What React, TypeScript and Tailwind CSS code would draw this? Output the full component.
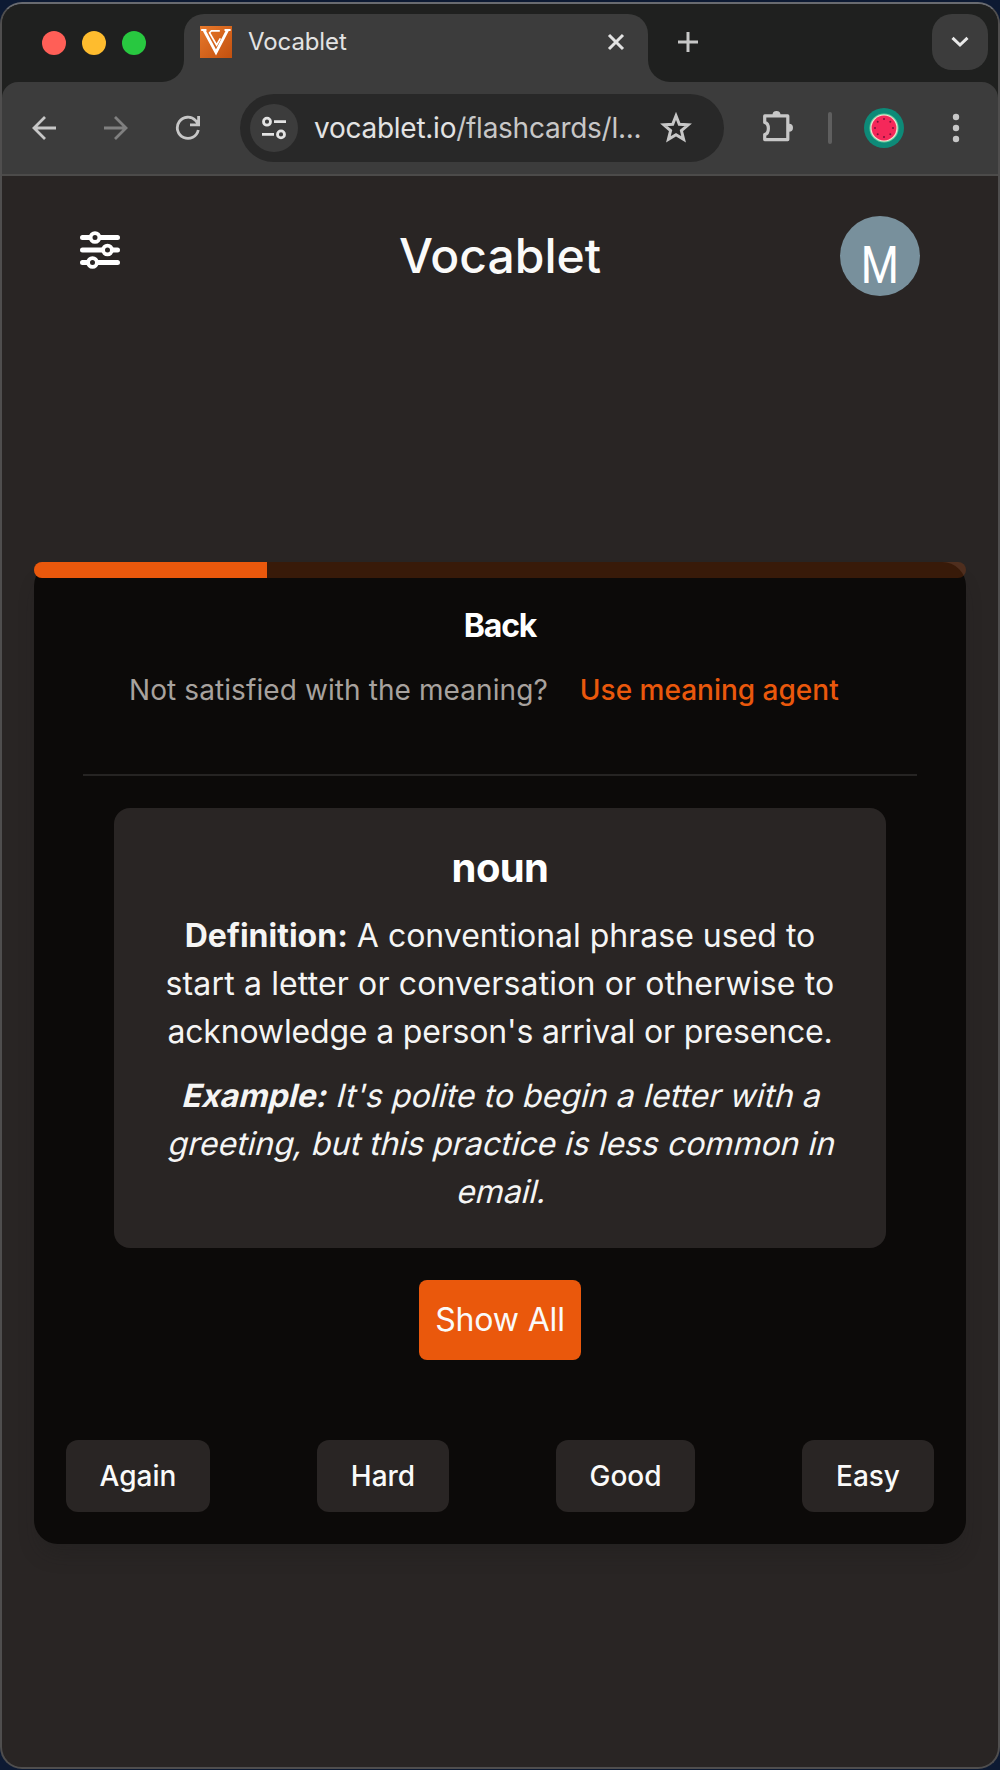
import React from "react";

function VocabletLogo() {
  return (
    <svg width="32" height="32" viewBox="0 0 32 32" className="shrink-0">
      <defs>
        <linearGradient id="logo-bg" x1="0" y1="0" x2="1" y2="1">
          <stop offset="0" stopColor="#e8792b" />
          <stop offset="1" stopColor="#c2500f" />
        </linearGradient>
      </defs>
      <rect width="32" height="32" fill="url(#logo-bg)" />
      <g fill="none" stroke="#fff">
        <path d="M4.2 4.5L16 26.5L27.6 4" strokeWidth="2.8" />
        <path d="M1.2 4H6.5M24.5 4H30.6" strokeWidth="1.8" />
        <path d="M19.8 4.8H11.4L9.6 6.8L16.6 19L20.4 12.4" strokeWidth="1.7" />
      </g>
    </svg>
  );
}

function TabStrip() {
  return (
    <div className="flex h-[78px] items-end bg-[#1f201f]">
      <div className="flex h-[78px] w-[160px] shrink-0 gap-4 pl-10 pt-[27px]">
        <span className="size-6 rounded-full bg-[#ff5f57]" />
        <span className="size-6 rounded-full bg-[#febc2e]" />
        <span className="size-6 rounded-full bg-[#28c840]" />
      </div>
      <div className="size-[22px] shrink-0 bg-[#3c3c3c]">
        <div className="size-full rounded-br-[22px] bg-[#1f201f]" />
      </div>
      <div className="flex h-[68px] w-[464px] shrink-0 items-start rounded-t-[20px] bg-[#3c3c3c] pl-4 pt-3">
        <VocabletLogo />
        <span className="ml-4 text-[24px] leading-[32px] tracking-[-0.1px] text-[#e3e3e3]">Vocablet</span>
        <svg width="20" height="20" viewBox="0 0 20 20" className="ml-auto mr-[22px] mt-[6px]">
          <path d="M3 3L17 17M17 3L3 17" stroke="#e3e3e3" strokeWidth="3" />
        </svg>
      </div>
      <div className="size-[22px] shrink-0 bg-[#3c3c3c]">
        <div className="size-full rounded-bl-[22px] bg-[#1f201f]" />
      </div>
      <svg width="20" height="20" viewBox="0 0 20 20" className="mb-[30px] ml-[8px]">
        <path d="M10 0V20M0 10H20" stroke="#c7c7c7" strokeWidth="3" />
      </svg>
      <div className="mb-3 ml-auto mr-[10px] flex size-14 items-center justify-center rounded-[20px] bg-[#3c3c3c]">
        <svg width="18" height="12" viewBox="0 0 18 12">
          <path d="M1.5 1.8L9 9L16.5 1.8" fill="none" stroke="#e8e8e8" strokeWidth="3" />
        </svg>
      </div>
    </div>
  );
}

function Toolbar() {
  return (
    <div className="bg-[#1f201f]">
      <div className="flex h-[94px] items-center rounded-t-[16px] border-b-2 border-[#4c4b4a] bg-[#3c3c3c] pl-[30px]">
        <svg width="24" height="24" viewBox="0 0 24 24" fill="none" stroke="#c7c7c7" strokeWidth="2.8">
          <path d="M24 12H2.5M13 1L2 12L13 23" />
        </svg>
        <svg width="24" height="24" viewBox="0 0 24 24" fill="none" stroke="#808080" strokeWidth="2.8" className="ml-12">
          <path d="M0 12H21.5M11 1L22 12L11 23" />
        </svg>
        <svg width="26" height="26" viewBox="0 0 26 26" fill="none" stroke="#c7c7c7" strokeWidth="2.8" className="ml-[47px]">
          <path d="M23.3 15A10.6 10.6 0 1 1 20.7 5.6L23.5 9.2M23.6 1V9.8H15" />
        </svg>
        <div className="ml-[39px] flex h-[68px] w-[484px] shrink-0 items-center rounded-full bg-[#282828] pl-[10px]">
          <div className="flex size-12 shrink-0 items-center justify-center rounded-full bg-[#3c3c3c]">
            <svg width="24" height="24" viewBox="0 0 24 24" fill="none" stroke="#e3e3e3" strokeWidth="2.8">
              <circle cx="5" cy="5.7" r="3.5" />
              <path d="M12 5.7H24M0 18.4H12" />
              <circle cx="19" cy="18.4" r="3.5" />
            </svg>
          </div>
          <span className="ml-4 w-[330px] whitespace-nowrap text-[28px] leading-[40px] tracking-[-0.26px] text-[#e3e3e3]">
            vocablet.io<span className="text-[#c7c7c7]">/flashcards/l...</span>
          </span>
          <svg width="34" height="34" viewBox="0 0 34 34" className="ml-[15px] shrink-0">
            <path
              d="M17 4.8L20.3 13.2L29.2 13.8L22.4 19.6L24.6 28.4L17 23.7L9.4 28.4L11.6 19.6L4.8 13.8L13.7 13.2Z"
              fill="none"
              stroke="#c7c7c7"
              strokeWidth="3"
            />
          </svg>
        </div>
        <svg width="34" height="34" viewBox="0 0 34 34" className="ml-[37px] shrink-0">
          <path
            d="M3.7 4.9H26.8V28.6H3.7V23.6C8.6 22.2 8.6 12.8 3.7 11.4Z"
            fill="none"
            stroke="#c7c7c7"
            strokeWidth="3.2"
            strokeLinejoin="round"
          />
          <path d="M11.5 4A4 4 0 0 1 19.5 4ZM28 12.8A4 4 0 0 1 28 20.8Z" fill="#c7c7c7" />
        </svg>
        <span className="ml-[33px] h-8 w-1 rounded-full bg-[#5f5f5f]" />
        <svg width="40" height="40" viewBox="0 0 40 40" className="ml-8 shrink-0">
          <circle cx="20" cy="20" r="20" fill="#0d8a78" />
          <circle cx="20" cy="20" r="14.6" fill="#5fcf9f" />
          <circle cx="20" cy="20" r="13.6" fill="#f7dcd0" />
          <circle cx="20" cy="20" r="12.4" fill="#f5285a" />
          <g fill="#7a1238">
            <circle cx="20" cy="11" r="1" />
            <circle cx="26.3" cy="13.7" r="1" />
            <circle cx="29" cy="20" r="1" />
            <circle cx="26.3" cy="26.3" r="1" />
            <circle cx="20" cy="29" r="1" />
            <circle cx="13.7" cy="26.3" r="1" />
            <circle cx="11" cy="20" r="1" />
            <circle cx="13.7" cy="13.7" r="1" />
          </g>
        </svg>
        <svg width="8" height="30" viewBox="0 0 8 30" className="ml-12" fill="#c7c7c7">
          <circle cx="4" cy="4" r="3.2" />
          <circle cx="4" cy="15" r="3.2" />
          <circle cx="4" cy="26" r="3.2" />
        </svg>
      </div>
    </div>
  );
}

function SlidersIcon() {
  return (
    <svg width="40" height="40" viewBox="0 0 40 40">
      <path d="M2.5 7.5H37.5M2.5 20H37.5M2.5 32.5H37.5" stroke="#fff" strokeWidth="5" strokeLinecap="round" />
      <g fill="#292524" stroke="#fff" strokeWidth="3.8">
        <circle cx="15" cy="7.5" r="4.4" />
        <circle cx="27.5" cy="20" r="4.4" />
        <circle cx="12.5" cy="32.5" r="4.4" />
      </g>
    </svg>
  );
}

function PageHeader() {
  return (
    <header className="grid h-[160px] grid-cols-[80px_1fr_80px] items-center px-[78px]">
      <button className="-mt-3 justify-self-start">
        <SlidersIcon />
      </button>
      <h1 className="text-center text-[48px] font-medium leading-[64px] text-[#fafaf9]">Vocablet</h1>
      <div className="flex size-20 items-center justify-center rounded-full bg-[#78909c] pt-[19px] font-[Roboto] text-[52px] leading-none text-white">
        <span className="inline-block scale-x-[0.84]">M</span>
      </div>
    </header>
  );
}

const ratings = [
  { label: "Again", width: "w-[144px]" },
  { label: "Hard", width: "w-[132px]" },
  { label: "Good", width: "w-[139px]" },
  { label: "Easy", width: "w-[132px]" },
];

function Flashcard() {
  return (
    <section className="mx-8 mt-[226px] flex h-[982px] flex-col rounded-[24px] bg-[#0c0a09] shadow-[0_14px_20px_-6px_rgba(28,30,28,0.35)]">
      <div className="h-4 shrink-0 overflow-hidden rounded-full bg-[#ea580c]/20">
        <div className="h-full w-1/4 bg-[#ea580c]" />
      </div>
      <h2 className="mt-6 text-center text-[32px] font-bold leading-[48px] tracking-[-1.2px] text-white">Back</h2>
      <div className="mt-5 flex gap-8 pl-[95px] text-[28px] leading-[40px]">
        <span className="tracking-[0.09px] text-[#a8a29e]">Not satisfied with the meaning?</span>
        <a className="font-medium text-[#ea580c]">Use meaning agent</a>
      </div>
      <hr className="mx-[49px] mt-16 border-0 border-t-2 border-[#262423] pt-[32px]" />
      <article className="mx-20 h-[440px] shrink-0 whitespace-nowrap rounded-[16px] bg-[#292524] px-8 pt-8 text-center text-[32px] leading-[48px] text-[#f5f5f4]">
        <h3 className="text-[40px] font-bold leading-[56px] tracking-[-0.6px] text-white">noun</h3>
        <p className="mt-4">
          <span className="block">
            <strong className="font-bold">Definition:</strong> A conventional phrase used to
          </span>
          <span className="block tracking-[0.14px]">start a letter or conversation or otherwise to</span>
          <span className="block tracking-[-0.17px]">acknowledge a person&apos;s arrival or presence.</span>
        </p>
        <p className="mt-4">
          <span className="block origin-[50%_74%] -skew-x-[14deg] tracking-[0.06px]">
            <strong className="font-bold">Example:</strong> It&apos;s polite to begin a letter with a
          </span>
          <span className="block origin-[50%_74%] -skew-x-[14deg]">greeting, but this practice is less common in</span>
          <span className="block origin-[50%_74%] -skew-x-[14deg]">email.</span>
        </p>
      </article>
      <button className="mx-auto mt-8 h-20 w-[162px] shrink-0 whitespace-nowrap rounded-[8px] bg-[#ea580c] text-[32px] tracking-[-0.15px] text-[#fafaf9]">
        Show All
      </button>
      <div className="mt-20 flex justify-between px-8">
        {ratings.map((r) => (
          <button
            key={r.label}
            className={`${r.width} h-[72px] rounded-[12px] bg-[#292524] text-[28px] font-medium text-[#fafaf9]`}
          >
            {r.label}
          </button>
        ))}
      </div>
    </section>
  );
}

export default function App() {
  return (
    <div className="h-[1770px] w-[1000px] overflow-hidden bg-[#0d1a33] pt-[2px] font-[Inter,sans-serif]">
      <div className="h-[1767px] overflow-hidden rounded-[22px] border-2 border-[#4f4e4e] border-t-[#696b70] bg-[#292524]">
        <TabStrip />
        <Toolbar />
        <PageHeader />
        <Flashcard />
      </div>
    </div>
  );
}
